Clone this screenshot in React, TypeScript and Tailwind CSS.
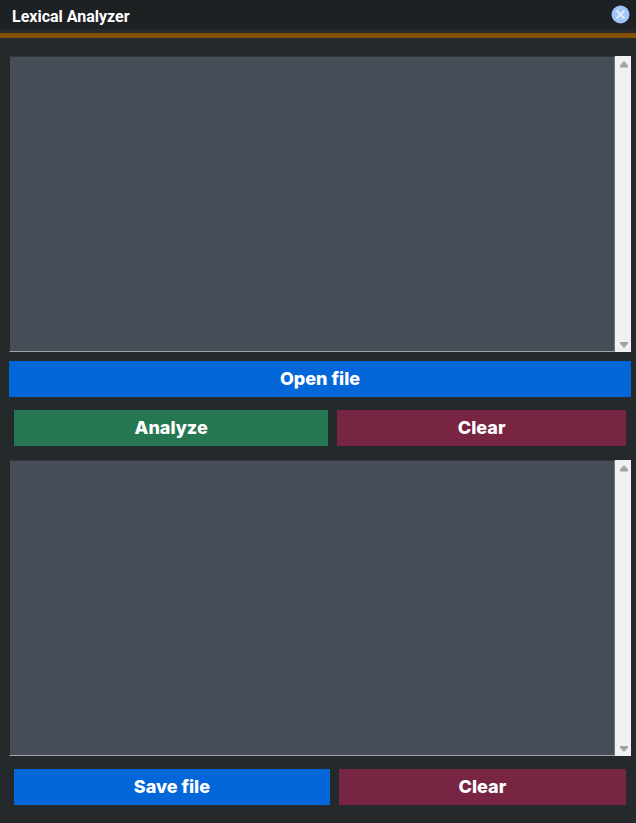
import React, { useState } from "react";

type EditorProps = {
  label: string;
  value: string;
  onChange: (value: string) => void;
};

function Editor({ label, value, onChange }: EditorProps) {
  return (
    <div className="flex h-[296px] w-full">
      <textarea
        aria-label={label}
        value={value}
        onChange={(event) => onChange(event.target.value)}
        className="block h-full min-w-0 flex-1 resize-none overflow-hidden border border-t-[#30363b] border-r-[#747a82] border-b-[#a0a4a8] border-l-[#22282b] bg-[#464d56] p-1 text-base text-white outline-none"
      />
      <div aria-hidden="true" className="flex w-4 flex-col items-center justify-between bg-[#f0f0f0] pt-[5px] pb-1 pl-px">
        <svg width="10" height="7" viewBox="0 0 10 7" fill="#a3a3a3">
          <path d="M4.5 0.5h1L9 4.5V6.5H1V4.5z" />
        </svg>
        <svg width="10" height="7" viewBox="0 0 10 7" fill="#a3a3a3">
          <path d="M1 1h8v1.5L5.5 6.5h-1L1 2.5z" />
        </svg>
      </div>
    </div>
  );
}

type ActionProps = {
  color: string;
  onClick?: () => void;
  children: React.ReactNode;
};

function Action({ color, onClick, children }: ActionProps) {
  return (
    <button
      type="button"
      onClick={onClick}
      className={`h-9 flex-auto text-center text-lg leading-6 font-extrabold text-white ${color}`}
    >
      {children}
    </button>
  );
}

export default function App() {
  const [source, setSource] = useState("");
  const [result, setResult] = useState("");

  return (
    <div className="min-h-screen bg-[#24292c] font-[Inter,'Liberation_Sans',sans-serif]">
      <header className="border-b-[5px] border-[#855003]">
        <div className="mb-1 flex h-[29px] items-center justify-between bg-[#1e2124] pr-[6px] pl-3">
          <h1 className="pt-1 font-[Roboto,sans-serif] text-base leading-6 font-bold text-white">
            Lexical Analyzer
          </h1>
          <button type="button" aria-label="Close">
            <svg width="19" height="19" viewBox="0 0 19 19" fill="none">
              <circle cx="9.5" cy="9.5" r="9" fill="#a1c4fb" />
              <path d="M5.5 5.5l8 8M13.5 5.5l-8 8" stroke="#e3ecfc" strokeWidth="1.8" />
            </svg>
          </button>
        </div>
      </header>
      <main className="flex flex-col pt-[18px] pr-[5px] pl-[9px]">
        <Editor label="Source code" value={source} onChange={setSource} />
        <div className="mt-[9px] flex">
          <Action color="bg-[#0366d9]">Open file</Action>
        </div>
        <div className="mt-[13px] mb-[14px] flex gap-[9px] px-[5px]">
          <Action color="bg-[#257751]">Analyze</Action>
          <Action color="bg-[#782443]" onClick={() => setSource("")}>
            Clear
          </Action>
        </div>
        <Editor label="Analysis result" value={result} onChange={setResult} />
        <div className="mt-[13px] flex gap-[9px] px-[5px]">
          <Action color="bg-[#0366d9]">Save file</Action>
          <Action color="bg-[#782443]" onClick={() => setResult("")}>
            Clear
          </Action>
        </div>
      </main>
    </div>
  );
}
